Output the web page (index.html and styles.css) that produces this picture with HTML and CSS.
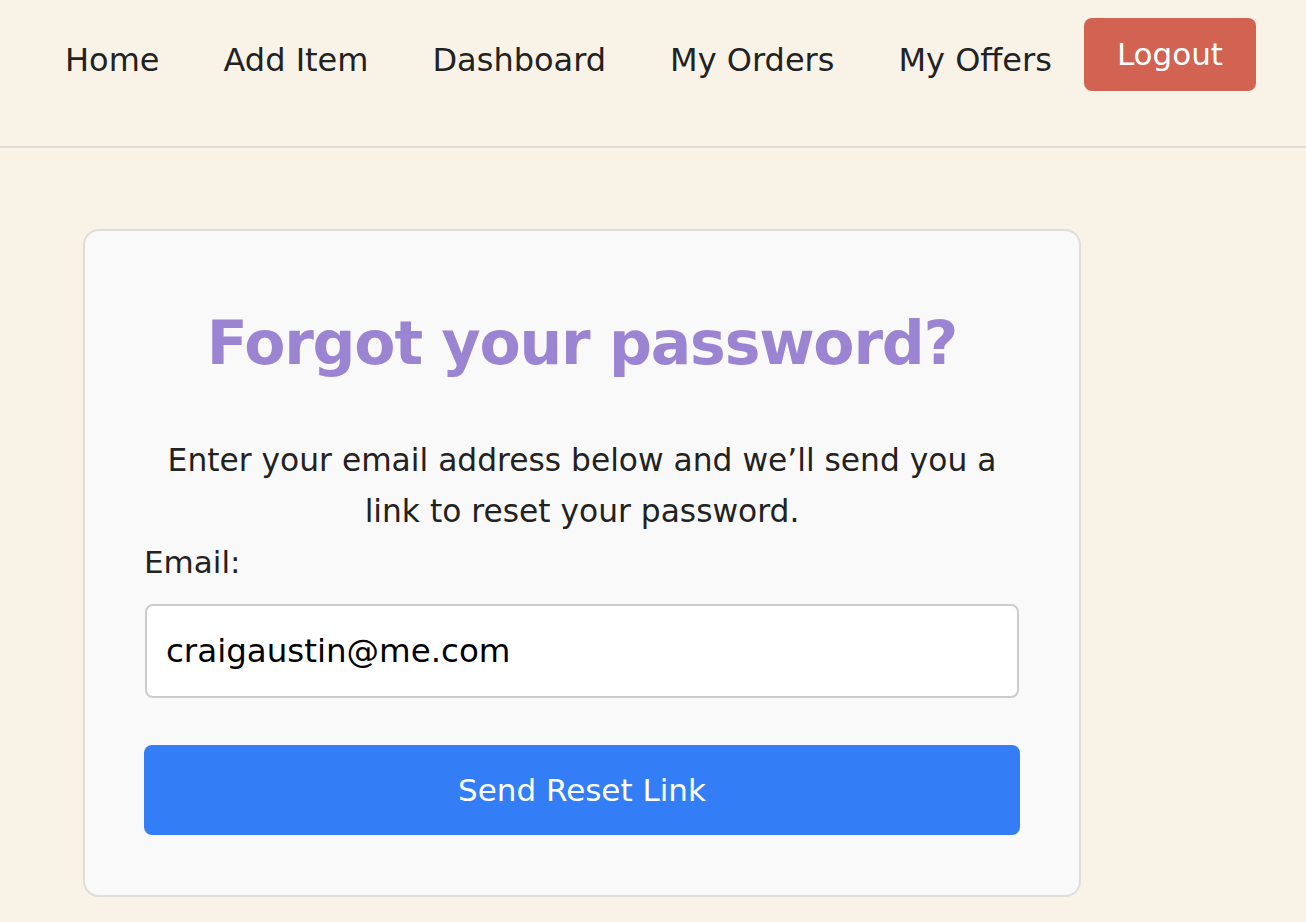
FILE: index.html
```html
<!DOCTYPE html>
<html lang="en">
<head>
<meta charset="utf-8">
<title>Forgot your password?</title>
<link rel="stylesheet" href="styles.css">
</head>
<body>
<header class="site-header">
  <nav class="nav">
    <a class="nav-link" href="#">Home</a>
    <a class="nav-link" href="#">Add Item</a>
    <a class="nav-link" href="#">Dashboard</a>
    <a class="nav-link" href="#">My Orders</a>
    <a class="nav-link" href="#">My Offers</a>
    <button class="logout-btn" type="button">Logout</button>
  </nav>
</header>
<main class="main">
  <section class="card">
    <h1 class="card-title">Forgot your password?</h1>
    <p class="card-text">Enter your email address below and we’ll send you a link to reset your password.</p>
    <form class="reset-form">
      <label class="field-label" for="email">Email:</label>
      <input class="field-input" id="email" type="email" value="craigaustin@me.com">
      <button class="submit-btn" type="button">Send Reset Link</button>
    </form>
  </section>
</main>
</body>
</html>
```
FILE: styles.css
```css
* { box-sizing: border-box; }

html, body {
  margin: 0;
  padding: 0;
}

body {
  background: #f9f2e7;
  font-family: "DejaVu Sans", "Liberation Sans", sans-serif;
  color: #222222;
  min-height: 922px;
}

.site-header {
  height: 148px;
  border-bottom: 2px solid #e0dedb;
}

.nav {
  display: flex;
  align-items: flex-start;
  padding: 18px 0 0 33px;
}

.nav-link {
  display: block;
  margin-top: 24px;
  padding: 0 32px;
  font-size: 32px;
  line-height: 37px;
  color: #222222;
  text-decoration: none;
}

.logout-btn {
  height: 73px;
  padding: 0 33px;
  border: none;
  border-radius: 8px;
  background: #d26352;
  color: #ffffff;
  font-family: inherit;
  font-size: 31px;
  line-height: 73px;
}

.main {
  padding: 81px 0 0 83px;
}

.card {
  width: 998px;
  background: #f9f9f9;
  border: 2px solid #dedddb;
  border-radius: 16px;
  padding: 78px 59px 60px;
}

.card-title {
  margin: 0 0 58px;
  text-align: center;
  font-size: 60px;
  letter-spacing: -1.2px;
  line-height: 68px;
  font-weight: bold;
  color: #9b85d2;
}

.card-text {
  margin: 0;
  text-align: center;
  font-size: 31.3px;
  line-height: 51px;
  color: #222222;
}

.reset-form {
  display: flex;
  flex-direction: column;
}

.field-label {
  font-size: 31px;
  line-height: 51px;
  color: #222222;
}

.field-input {
  margin: 16px 1px 0;
  height: 94px;
  padding: 0 19px;
  border: 2px solid #cccccc;
  border-radius: 8px;
  background: #ffffff;
  font-family: inherit;
  font-size: 32.5px;
  color: #000000;
}

.submit-btn {
  margin-top: 47px;
  height: 90px;
  border: none;
  border-radius: 8px;
  background: #337ef7;
  color: #ffffff;
  font-family: inherit;
  font-size: 31px;
}
```
